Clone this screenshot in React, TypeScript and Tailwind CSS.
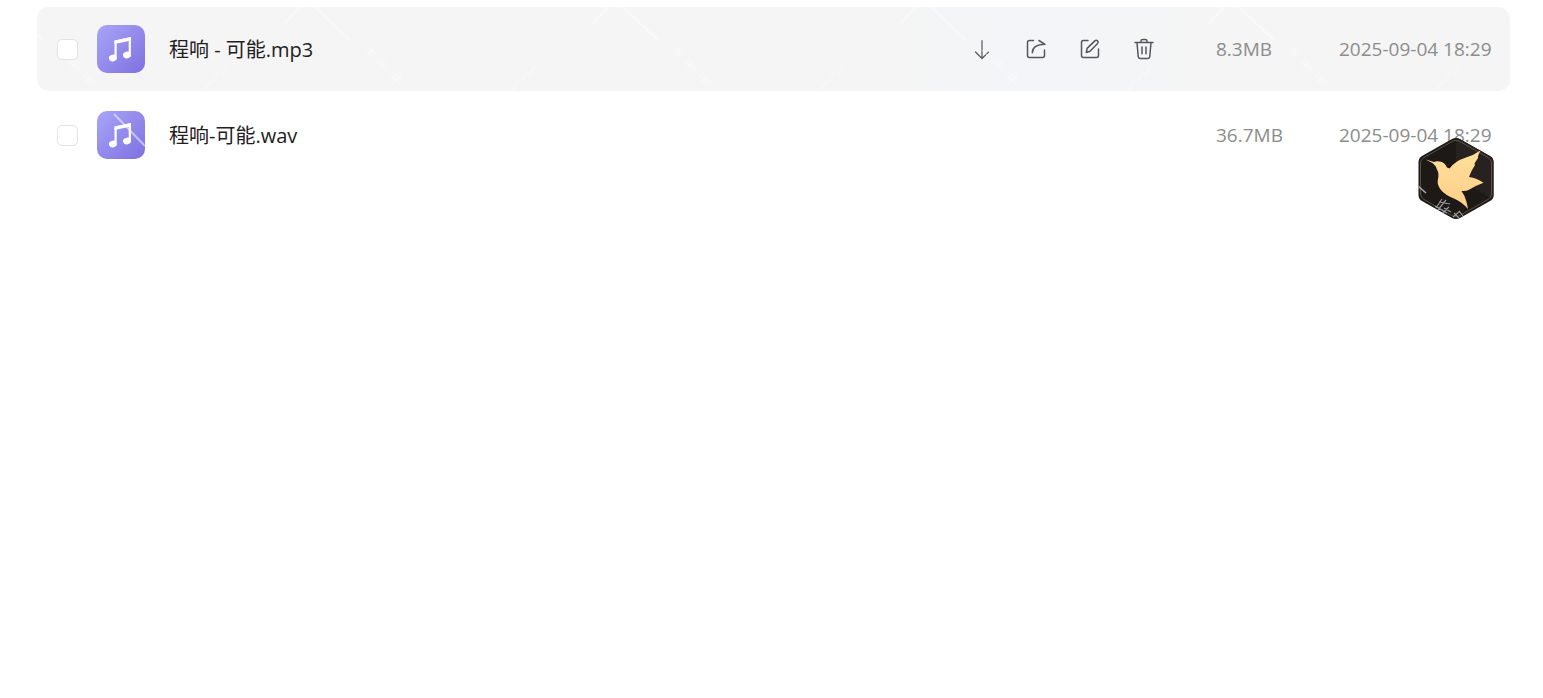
import type { ReactNode } from "react";

type FileEntry = { name: string; size: string; date: string; active?: boolean; sheen?: boolean };

const files: FileEntry[] = [
  { name: "程响 - 可能.mp3", size: "8.3MB", date: "2025-09-04 18:29", active: true },
  { name: "程响-可能.wav", size: "36.7MB", date: "2025-09-04 18:29", sheen: true },
];

function MusicIcon({ sheen }: { sheen?: boolean }) {
  return (
    <span className="flex size-12 shrink-0 overflow-hidden rounded-[10px] bg-linear-to-br from-[#a9a5f8] to-[#7f70df]">
      <svg viewBox="0 0 48 48" className="size-12" aria-hidden="true">
        <path d="M18.6 32V16.5L32.800 13.4V29" fill="none" stroke="#fff" strokeWidth="2.200" strokeLinejoin="round" />
        <path d="M17.500 15.600L34 12V15.400L17.500 19Z" fill="#fff" />
        <ellipse cx="15.900" cy="33" rx="4" ry="3.300" fill="#fff" transform="rotate(-15 15.900 33)" />
        <ellipse cx="30" cy="30" rx="4" ry="3.300" fill="#fff" transform="rotate(-15 30 30)" />
        {sheen && <path d="M17 3L48 35" stroke="#fff" strokeOpacity=".5" strokeWidth="2" />}
      </svg>
    </span>
  );
}

function Action({ label, children }: { label: string; children: ReactNode }) {
  return (
    <button type="button" aria-label={label} className="size-[22px] text-[#55575a]">
      <svg
        viewBox="0 0 22 22"
        className="size-[22px]"
        fill="none"
        stroke="currentColor"
        strokeWidth="1.5"
        strokeLinecap="round"
        strokeLinejoin="round"
      >
        {children}
      </svg>
    </button>
  );
}

function Actions() {
  return (
    <div className="flex items-center gap-8">
      <Action label="下载">
        <path d="M11 2.5V20.5M4.500 14L11 20.500L17.500 14" strokeWidth="1.200" />
      </Action>
      <Action label="分享">
        <path d="M8.500 2.500H4.500Q2.500 2.500 2.500 4.500V17.500Q2.500 19.500 4.500 19.500H17.500Q19.500 19.500 19.500 17.500V12" />
        <path d="M14 2.500L20 6.300Q7.500 6.500 7.300 14.800" />
      </Action>
      <Action label="重命名">
        <path d="M9 2.500H4.500Q2.500 2.500 2.500 4.500V17.500Q2.500 19.500 4.500 19.500H17.500Q19.500 19.500 19.500 17.500V11" />
        <path d="M7.300 14.500L8.100 10.400L15.800 2.900Q17.200 1.700 18.500 2.900Q19.800 4.200 18.600 5.500L11 13.200Z" />
      </Action>
      <Action label="删除">
        <path d="M2 4.500H20M8 4V3Q8 1.500 9.600 1.500H12.400Q14 1.500 14 3V4" />
        <path d="M4 4.700L5.200 18.300Q5.400 20.500 7.300 20.500H14.700Q16.600 20.500 16.800 18.300L18 4.700M9 9V15.800M13 9V15.800" />
      </Action>
    </div>
  );
}

function Sheen() {
  return (
    <svg className="pointer-events-none absolute inset-0 size-full" aria-hidden="true">
      <defs>
        <pattern id="lines" width="308" height="84" x="240" patternUnits="userSpaceOnUse">
          <path d="M38 0L74 34M23 0L8 16" stroke="#fff" strokeOpacity=".4" strokeWidth="2" fill="none" />
          <path
            d="M89 43l6 6m-2-8l6 6m-8 1l6-6M100 54l9 9m-6-10l8 8m-10 1l8-8M113 67l10 10m-6-11l9 9m-10 1l8-8M235 84l7-10m2 2l6-11m2 4l6-10"
            stroke="#fff"
            strokeOpacity=".35"
            strokeWidth="1.500"
            fill="none"
          />
        </pattern>
      </defs>
      <rect width="100%" height="100%" fill="url(#lines)" />
    </svg>
  );
}

function FileRow({ file }: { file: FileEntry }) {
  return (
    <li
      className={`relative flex h-[84px] items-center overflow-hidden rounded-xl pr-[19px] pl-5 ${
        file.active ? "bg-[#f5f5f5]" : ""
      }`}
    >
      {file.active && <Sheen />}
      <input
        type="checkbox"
        aria-label={file.name}
        className="mr-[19px] size-[21px] shrink-0 appearance-none rounded-[5px] border border-[#e3e3e3] bg-white"
      />
      <MusicIcon sheen={file.sheen} />
      <a href="#" className="ml-6 min-w-0 flex-1 truncate pt-0.5 text-[20px] leading-7 text-[#1f2022]">
        {file.name}
      </a>
      {file.active && (
        <div className="flex h-full items-center bg-linear-to-r from-transparent via-[#f3f5f8] to-transparent pr-[61px] pl-[100px]">
          <Actions />
        </div>
      )}
      <span className="w-[123px] shrink-0 text-[19px] leading-7 text-[#8c8c8c]">{file.size}</span>
      <time className="w-[152px] shrink-0 text-[19px] leading-7 whitespace-nowrap text-[#8c8c8c]">{file.date}</time>
    </li>
  );
}

function BirdBadge() {
  return (
    <button type="button" aria-label="助手" className="absolute top-[137px] right-[49px] h-[83px] w-[76px]">
      <svg viewBox="18 17 76 83" className="size-full">
        <defs>
          <clipPath id="hex">
            <path d="M52 19Q56 17 60 19L90 36Q93.500 38 93.500 42V75Q93.500 79 90 81L60 98Q56 100 52 98L22 81Q18.500 79 18.500 75V42Q18.500 38 22 36Z" />
          </clipPath>
          <linearGradient id="gold" x1="0" y1="0" x2="0" y2="1">
            <stop offset="0" stopColor="#ffe09b" />
            <stop offset="1" stopColor="#ffce88" />
          </linearGradient>
        </defs>
        <g clipPath="url(#hex)">
          <path d="M18 17H94V100H18Z" fill="#1c1917" />
          <path d="M56 17L94 38V80L56 58Z" fill="#272220" />
          <path
            d="M53 21Q56 19.500 59 21L88 37.500Q91.500 39.500 91.500 43V74Q91.500 77.500 88 79.500L59 96Q56 97.500 53 96L24 79.500Q20.500 77.500 20.500 74V43Q20.500 39.500 24 37.500Z"
            fill="none"
            stroke="#6b5d4c"
            strokeWidth=".8"
          />
          <path
            d="M25.500 39.500L34 42Q37.500 40.800 41 41.800Q45 43 47 47.500L49.500 48.500Q55 41 66 37.500Q74 35 80.500 30.500Q77.500 36 78 38L74.500 43.500L75 45Q71 51 69 57Q77 58 83.500 62.800Q76 65.500 69.500 69.500Q66 71.500 61.500 71L64.500 76Q67 82 68 89Q62 82 54 78.500Q45 75 41 70Q37 65 37.800 60Q39.500 54 37 49.500Q35.500 45 32.500 43Z"
            fill="url(#gold)"
          />
          <path d="M18 66L26 73" stroke="#aaa" strokeWidth="1.600" />
          <path
            d="M42 79L36 88M39 82L50 84M46 80L37 91M35 86L47 93M49 87L40 95M44 88L51 92M54 93l5 5m0-7l4 5m-10 1l7-6"
            stroke="#999"
            strokeWidth="1.200"
            fill="none"
          />
        </g>
      </svg>
    </button>
  );
}

export default function App() {
  return (
    <main className="relative min-h-screen bg-white pt-[7px] pr-[33px] pl-[37px] font-['Open_Sans','Noto_Sans_CJK_SC',sans-serif]">
      <ul className="flex flex-col gap-0.5">
        {files.map((file) => (
          <FileRow key={file.name} file={file} />
        ))}
      </ul>
      <BirdBadge />
    </main>
  );
}
